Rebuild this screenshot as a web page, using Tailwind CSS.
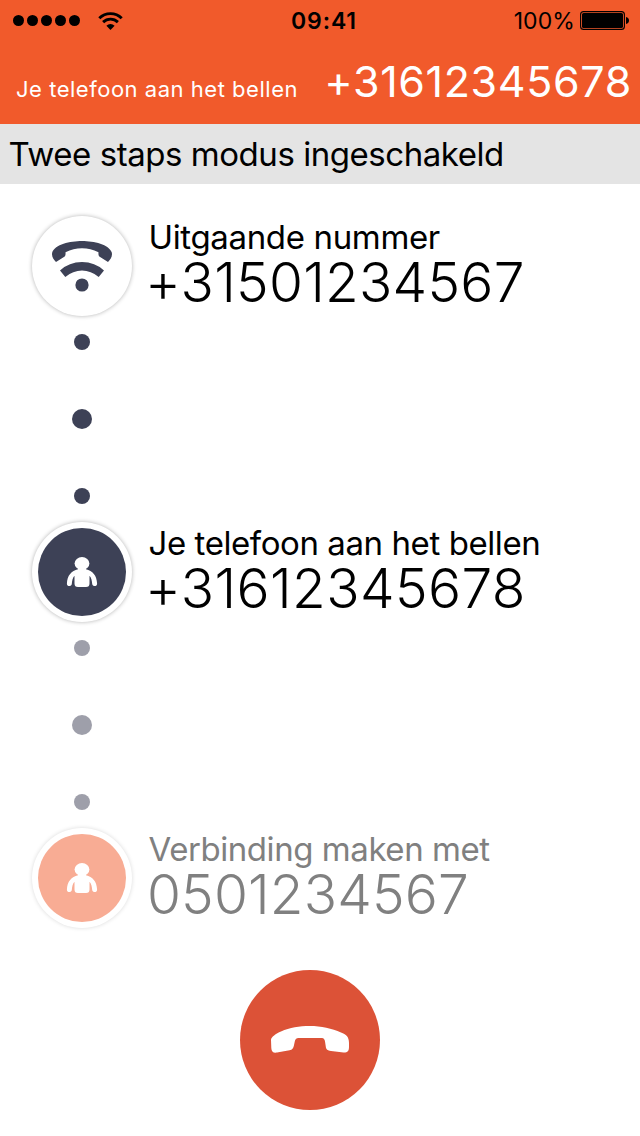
<!DOCTYPE html>
<html lang="nl">
<head>
<meta charset="utf-8">
<title>Twee staps modus</title>
<script src="https://cdn.jsdelivr.net/npm/@tailwindcss/browser@4"></script>
</head>
<body class="bg-white">
<div class="flex h-[1136px] w-[640px] flex-col overflow-hidden bg-white font-['Inter','Liberation_Sans',sans-serif] text-black">
  <header class="h-[124px] bg-[#f15a2b]">
    <!-- Status bar -->
    <div class="grid h-10 grid-cols-3 items-center pl-[13px] pr-[11px]">
      <div class="flex items-center">
        <div class="flex gap-[3px]">
          <span class="size-[11px] rounded-full bg-black"></span>
          <span class="size-[11px] rounded-full bg-black"></span>
          <span class="size-[11px] rounded-full bg-black"></span>
          <span class="size-[11px] rounded-full bg-black"></span>
          <span class="size-[11px] rounded-full bg-black"></span>
        </div>
        <svg class="ml-[18px] h-[18px] w-[25px]" viewBox="0 0 25 18" fill="none" stroke="#000" stroke-width="2.9">
          <path d="M1.3 6.3A15.8 15.8 0 0 1 23.7 6.3"/>
          <path d="M5.1 10.1A10.6 10.6 0 0 1 19.9 10.1"/>
          <path d="M12.5 17.9L8.4 13.7A5.9 5.9 0 0 1 16.6 13.7Z" fill="#000" stroke="none"/>
        </svg>
      </div>
      <div class="pt-px pl-[6px] text-center text-[23px] leading-10 font-semibold tracking-[0.9px]">09:41</div>
      <div class="flex items-center justify-end">
        <span class="mr-[5px] pt-px text-[23px] leading-10 tracking-[0.1px]">100%</span>
        <svg class="h-[19px] w-[49px]" viewBox="0 0 49 19">
          <rect x=".6" y=".6" width="43.8" height="17.8" rx="3" fill="none" stroke="#000" stroke-width="1.1"/>
          <rect x="2" y="2" width="41" height="15" rx="1.6"/>
          <path d="M46 6Q49 6.8 49 9.5T46 13Z"/>
        </svg>
      </div>
    </div>
    <div class="flex items-baseline justify-between pt-[11px] pr-[8px] pl-[16px] text-white">
      <span class="text-[22px] leading-[60px] tracking-[0.52px]">Je telefoon aan het bellen</span>
      <span class="text-[43px] leading-[60px] tracking-[0.65px]">+31612345678</span>
    </div>
  </header>

  <div class="h-[60px] bg-[#e4e4e4] pl-[8.5px] text-[33px] leading-[60px] tracking-[-0.45px]">Twee staps modus ingeschakeld</div>

  <main class="flex flex-1 flex-col pt-8 pl-8">
    <section class="flex h-[306px]">
      <div class="flex w-[100px] flex-col items-center">
        <div class="flex size-[100px] shrink-0 items-center justify-center rounded-full bg-white shadow-[0_0_4px_rgba(0,0,0,0.3)]">
          <svg class="size-[100px]" viewBox="0 0 100 100" fill="#3d4156">
            <path d="M20.2 36.5C23 28.5 38 25 50 25S77 28.500 79.800 36.500C80.600 40.500 78.500 43.500 76 46L67.300 40.600Q66.200 39.500 66.500 36.200C61 33.800 56 32.200 50 32.200S39 33.800 33.500 36.200Q33.800 39.500 32.700 40.600L24 46C21.500 43.500 19.400 40.500 20.200 36.500Z"/>
            <path d="M28 54.500Q37 46 50 46T72 54.500L66.700 61Q59 54.500 50 54.500T33.300 61Z"/>
            <circle cx="50" cy="69" r="6.600"/>
          </svg>
        </div>
        <div class="mt-[18px] flex flex-col items-center gap-[59px]">
          <span class="size-4 rounded-full bg-[#3d4156]"></span>
          <span class="size-5 rounded-full bg-[#3d4156]"></span>
          <span class="size-4 rounded-full bg-[#3d4156]"></span>
        </div>
      </div>
      <div class="pt-[3px] pl-[16.5px]">
        <p class="text-[33px] leading-[36px] tracking-[-0.35px]">Uitgaande nummer</p>
        <p class="-ml-[3.5px] text-[55px] leading-[54px] font-light tracking-[0.25px]">+31501234567</p>
      </div>
    </section>

    <section class="flex h-[306px]">
      <div class="flex w-[100px] flex-col items-center">
        <div class="flex size-[100px] shrink-0 items-center justify-center rounded-full bg-white shadow-[0_0_4px_rgba(0,0,0,0.3)]">
          <svg class="size-[88px] rounded-full bg-[#3d4156]" viewBox="0 0 88 88" fill="#fff">
            <ellipse cx="44" cy="35.500" rx="7.400" ry="6.500"/>
            <path d="M40 39.500H48V41.200C54.500 42.500 58.800 47.500 59.100 55.500C59.200 58.900 54.700 58.900 54.200 56C54 53 53.200 49.500 51.500 47.800V55.500Q51.500 59 48 59H40Q36.500 59 36.500 55.500V47.800C34.800 49.500 34 53 33.800 56C33.300 58.900 28.800 58.900 28.900 55.500C29.200 47.500 33.500 42.500 40 41.200Z"/>
          </svg>
        </div>
        <div class="mt-[18px] flex flex-col items-center gap-[59px]">
          <span class="size-4 rounded-full bg-[#9e9faa]"></span>
          <span class="size-5 rounded-full bg-[#9e9faa]"></span>
          <span class="size-4 rounded-full bg-[#9e9faa]"></span>
        </div>
      </div>
      <div class="pt-[3px] pl-[16.5px]">
        <p class="text-[33px] leading-[36px] tracking-[-0.42px]">Je telefoon aan het bellen</p>
        <p class="-ml-[3.5px] text-[55px] leading-[54px] font-light tracking-[0.4px]">+31612345678</p>
      </div>
    </section>

    <section class="flex h-[110px]">
      <div class="flex w-[100px] flex-col items-center">
        <div class="flex size-[100px] shrink-0 items-center justify-center rounded-full bg-white shadow-[0_0_4px_rgba(0,0,0,0.15)]">
          <svg class="size-[88px] rounded-full bg-[#f8ac94]" viewBox="0 0 88 88" fill="#fff">
            <ellipse cx="44" cy="35.500" rx="7.400" ry="6.500"/>
            <path d="M40 39.500H48V41.200C54.500 42.500 58.800 47.500 59.100 55.500C59.200 58.900 54.700 58.900 54.200 56C54 53 53.200 49.500 51.500 47.800V55.500Q51.500 59 48 59H40Q36.500 59 36.500 55.500V47.800C34.800 49.500 34 53 33.800 56C33.300 58.900 28.800 58.900 28.900 55.500C29.200 47.500 33.500 42.500 40 41.200Z"/>
          </svg>
        </div>
      </div>
      <div class="pt-[3px] pl-[16.5px] text-[#808080]">
        <p class="text-[33px] leading-[36px] tracking-[-0.44px]">Verbinding maken met</p>
        <p class="-ml-[1.5px] text-[55px] leading-[54px] font-light tracking-[0.15px]">0501234567</p>
      </div>
    </section>

    <!-- Hang up -->
    <button class="mt-8 ml-52 flex size-[140px] items-center justify-center rounded-full bg-[#dc5237]" aria-label="Ophangen">
      <svg class="size-[140px]" viewBox="0 0 140 140" fill="#fff">
        <path d="M31 70C31 67 36 63.500 41 61.500C50 57.500 59 56 70 56C81 56 92 58.500 101 62.500C106 64.500 109 66.500 109 73V77C109 81 107.500 82.800 103.500 82.600L91 81C87.500 80.500 86 79.500 85.700 76L85 71.500Q84.500 68 82 68H58Q55.500 68 55 70.500L53.800 76C53.200 78.500 52.500 79.500 49.500 80.300L37 82.600C33 83.200 31.500 81.500 31.300 78Z"/>
      </svg>
    </button>
  </main>
</div>
</body>
</html>
